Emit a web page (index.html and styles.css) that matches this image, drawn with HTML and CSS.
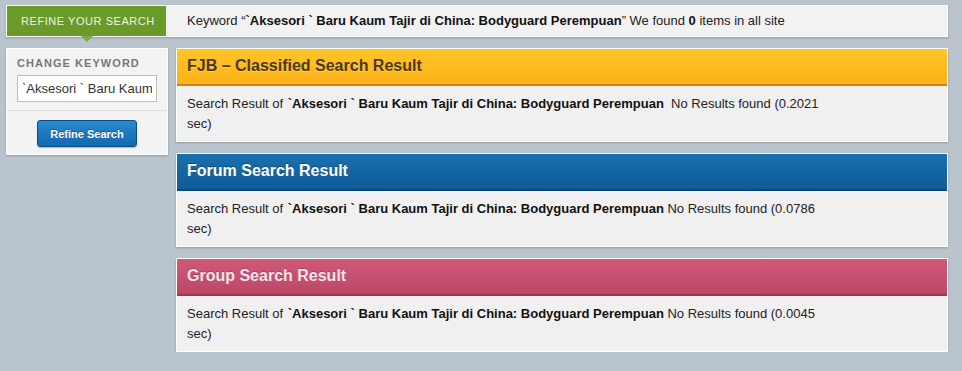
FILE: index.html
```html
<!DOCTYPE html>
<html>
<head>
<meta charset="utf-8">
<link rel="stylesheet" href="styles.css">
</head>
<body>
<div class="page">
  <div class="topbar">
    <div class="tab">REFINE YOUR SEARCH<span class="pointer"></span></div>
    <div class="summary">Keyword “<b>`Aksesori ` Baru Kaum Tajir di China: Bodyguard Perempuan</b>” We found <b>0</b> items in all site</div>
  </div>
  <div class="main">
    <aside class="sidebar">
      <div class="side-top">
        <div class="side-label">CHANGE KEYWORD</div>
        <input class="kw" type="text" value="`Aksesori ` Baru Kaum Tajir di China: Bodyguard Perempuan">
      </div>
      <div class="side-bottom">
        <button class="btn">Refine Search</button>
      </div>
    </aside>
    <section class="results">
      <div class="panel">
        <div class="panel-head fjb">FJB – Classified Search Result</div>
        <div class="panel-body"><p class="result-text">Search Result of <b>`Aksesori ` Baru Kaum Tajir di China: Bodyguard Perempuan</b>&nbsp; No Results found (0.2021 sec)</p></div>
      </div>
      <div class="panel">
        <div class="panel-head forum">Forum Search Result</div>
        <div class="panel-body"><p class="result-text">Search Result of <b>`Aksesori ` Baru Kaum Tajir di China: Bodyguard Perempuan</b> No Results found (0.0786 sec)</p></div>
      </div>
      <div class="panel">
        <div class="panel-head group">Group Search Result</div>
        <div class="panel-body"><p class="result-text">Search Result of <b>`Aksesori ` Baru Kaum Tajir di China: Bodyguard Perempuan</b> No Results found (0.0045 sec)</p></div>
      </div>
    </section>
  </div>
</div>
</body>
</html>
```

FILE: styles.css
```css
html, body {
  margin: 0;
  padding: 0;
}
body {
  background: #b9c4cc;
  font-family: "Liberation Sans", Arial, sans-serif;
  color: #222;
  font-size: 13px;
}
.page {
  width: 942px;
  padding: 5px 0 0 6px;
}
.topbar {
  display: flex;
  align-items: center;
  height: 30px;
  background: #f2f2f2;
  border: 1px solid #fff;
  box-shadow: 0 1px 2px rgba(60, 80, 95, 0.35);
}
.tab {
  position: relative;
  width: 159px;
  height: 30px;
  box-sizing: border-box;
  background: #6a9a2a;
  color: #eef5e2;
  font-size: 11px;
  letter-spacing: 0.55px;
  line-height: 30px;
  padding-left: 14px;
}
.pointer {
  position: absolute;
  left: 74px;
  bottom: -6px;
  width: 0;
  height: 0;
  border-left: 6px solid transparent;
  border-right: 6px solid transparent;
  border-top: 6px solid #7fa64a;
}
.summary {
  margin-left: 21px;
  font-size: 13px;
  color: #222;
  padding-bottom: 1px;
}
.summary b {
  color: #111;
}
.main {
  display: flex;
  align-items: flex-start;
  gap: 8px;
  margin-top: 11px;
}
.sidebar {
  width: 160px;
  background: #f3f3f3;
  border: 1px solid #fff;
  box-shadow: 0 1px 2px rgba(60, 80, 95, 0.35);
}
.side-top {
  padding: 8px 10px 8px 10px;
  border-bottom: 1px solid #dcdcdc;
}
.side-label {
  font-size: 11px;
  font-weight: bold;
  color: #777;
  letter-spacing: 1.05px;
  line-height: 12px;
  margin-bottom: 6px;
}
.kw {
  display: block;
  width: 140px;
  height: 27px;
  box-sizing: border-box;
  border: 1px solid #bdbdbd;
  background: #fff;
  font-family: "Liberation Sans", Arial, sans-serif;
  font-size: 13px;
  color: #333;
  padding: 0 4px;
  outline: none;
}
.side-bottom {
  padding: 9px 0 7px 0;
  display: flex;
  justify-content: center;
}
.btn {
  width: 100px;
  height: 27px;
  border: 1px solid #0b4f85;
  border-radius: 3px;
  background: linear-gradient(#2a8ad2, #1467ad);
  color: #fff;
  font-family: "Liberation Sans", Arial, sans-serif;
  font-size: 11px;
  font-weight: bold;
  text-shadow: 0 -1px 0 rgba(0, 0, 0, 0.3);
  box-shadow: 0 1px 1px rgba(0, 0, 0, 0.25);
  padding: 0;
}
.results {
  width: 772px;
  display: flex;
  flex-direction: column;
  gap: 11px;
}
.panel {
  background: #f0f0f0;
  border: 1px solid #fff;
  box-shadow: 0 1px 2px rgba(60, 80, 95, 0.35);
}
.panel-head {
  height: 35px;
  line-height: 33px;
  padding-left: 10px;
  font-size: 16px;
  font-weight: bold;
  border-bottom: 2px solid;
}
.fjb {
  background: linear-gradient(#ffc526, #fcb219);
  color: #4b3710;
  border-bottom-color: #cf7f1c;
  text-shadow: 0 1px 0 rgba(255, 230, 150, 0.5);
}
.forum {
  background: linear-gradient(#1a70ae, #0e5c98);
  color: #fff;
  border-bottom-color: #0a4677;
  text-shadow: 0 -1px 0 rgba(0, 0, 0, 0.3);
}
.group {
  background: linear-gradient(#cf5979, #bc4766);
  color: #f8e3ea;
  border-bottom-color: #9c3552;
  text-shadow: 0 -1px 0 rgba(0, 0, 0, 0.2);
}
.panel-body {
  padding: 8px 10px 7px 10px;
}
.result-text {
  margin: 0;
  width: 640px;
  line-height: 20px;
  font-size: 13px;
  color: #222;
}
.result-text b {
  color: #111;
  margin-left: 1px;
}
```
